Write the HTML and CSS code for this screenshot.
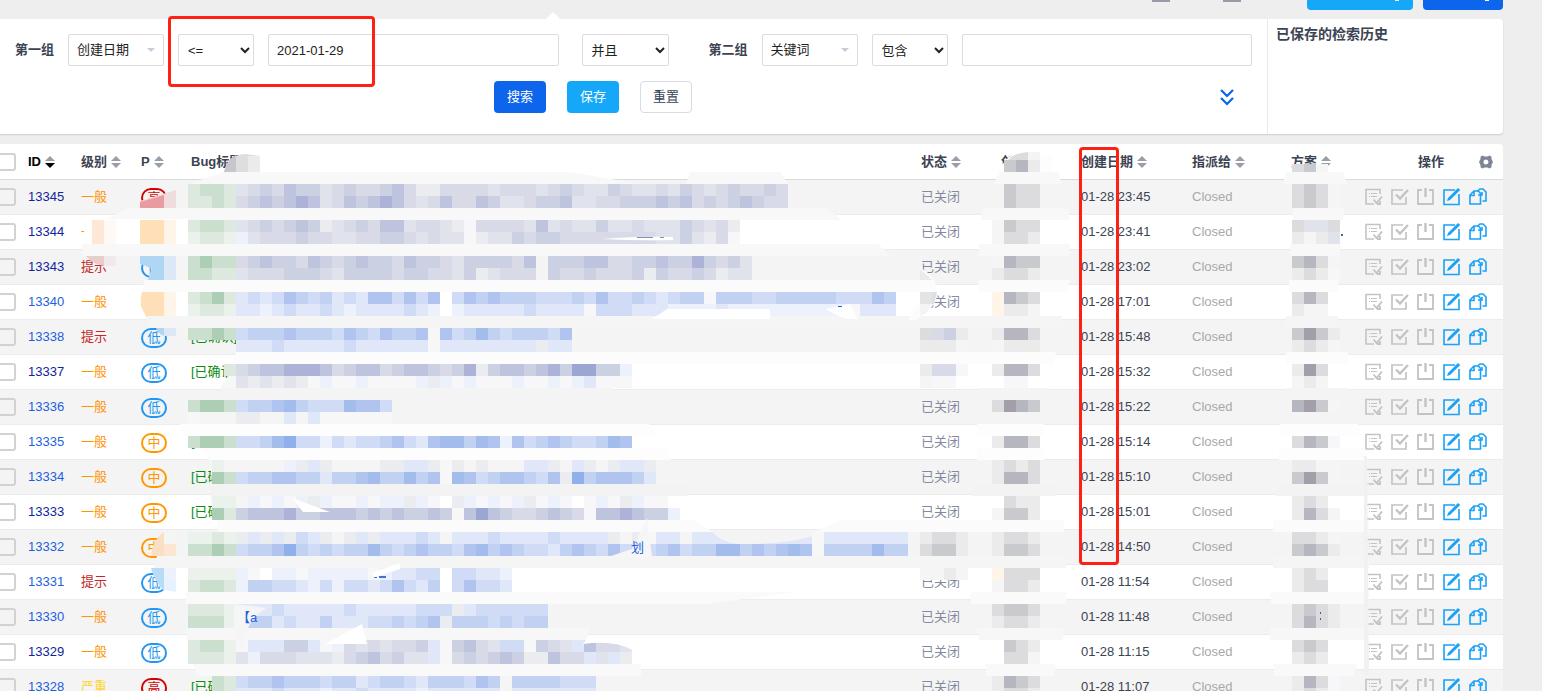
FILE: index.html
```html
<!DOCTYPE html>
<html lang="zh-CN">
<head>
<meta charset="utf-8">
<title>Bug</title>
<link rel="stylesheet" href="styles.css">
</head>
<body>
<svg class="defs" aria-hidden="true">
  <symbol id="i-confirm" viewBox="0 0 18 18"><path d="M15 6V1.500H1V16h8" fill="none" stroke="currentColor" stroke-width="1.600"/><path d="M4 5.500h1M6 5.500h6M4 8.500h1M6 8.500h6" stroke="currentColor"/><path d="M8.500 11.500l3 3.500 5.500-6.500M15 13v3h-3" fill="none" stroke="currentColor" stroke-width="1.800"/></symbol>
  <symbol id="i-check" viewBox="0 0 18 18"><path d="M12 2H1v14h14V9" fill="none" stroke="currentColor" stroke-width="1.700"/><path d="M5 6.500l4 4 8-8.500" fill="none" stroke="currentColor" stroke-width="2.400"/></symbol>
  <symbol id="i-power" viewBox="0 0 18 18"><path d="M5 2H1v14h15V2h-4" fill="none" stroke="currentColor" stroke-width="1.800"/><path d="M8.500 0v9" stroke="currentColor" stroke-width="2.400"/></symbol>
  <symbol id="i-edit" viewBox="0 0 18 18"><path d="M12 2H1v14.500h15V6" fill="none" stroke="currentColor" stroke-width="1.600"/><path d="M4 13l1-3L15 0l2.200 2L7 12z" fill="currentColor"/></symbol>
  <symbol id="i-copy" viewBox="0 0 18 18"><path d="M5 3h4.500l2 2.500V16H1V7zM5 3v4.500H1" fill="none" stroke="currentColor" stroke-width="1.600"/><path d="M8.500 3L11 1h3l3 3v9h-3.500M13 4v3H9" fill="none" stroke="currentColor" stroke-width="1.600"/></symbol>
  <symbol id="i-sort" viewBox="0 0 10 12"><path d="M5 0l5 5H0z" fill="#9b9ea8"/><path d="M5 12L0 7h10z" fill="currentColor"/></symbol>
</svg>
<header class="topbar">
  <span class="tick"></span><span class="tick"></span>
  <button class="top-btn sky" aria-label="导出"></button>
  <button class="top-btn royal" aria-label="提Bug"></button>
</header>
<main class="main">
  <section class="search">
    <form class="search-form" onsubmit="return false">
      <div class="groups">
        <div class="group">
          <label for="f1">第一组</label>
          <span class="pick"><select id="f1"><option>创建日期</option></select></span>
          <select class="op" aria-label="条件"><option>&lt;=</option></select>
          <input type="text" value="2021-01-29" aria-label="值">
        </div>
        <select class="join" aria-label="并且"><option>并且</option></select>
        <div class="group">
          <label for="f2">第二组</label>
          <span class="pick"><select id="f2"><option>关键词</option></select></span>
          <select class="op" aria-label="条件"><option>包含</option></select>
          <input type="text" aria-label="值">
        </div>
      </div>
      <div class="actions">
        <div class="buttons">
          <button class="btn royal">搜索</button>
          <button class="btn sky">保存</button>
          <button class="btn plain" type="reset">重置</button>
        </div>
        <button class="more" aria-label="更多"><svg width="14" height="17" viewBox="0 0 14 17"><path d="M1 1l6 6 6-6M1 9l6 6 6-6" fill="none" stroke="#0d62ec" stroke-width="2.200"/></svg></button>
      </div>
    </form>
    <aside class="saved"><h4>已保存的检索历史</h4></aside>
  </section>
  <section class="list">
    <table>
      <colgroup><col class="c-check"><col class="c-id"><col class="c-level"><col class="c-pri"><col><col class="c-status"><col class="c-by"><col class="c-date"><col class="c-to"><col class="c-plan"><col class="c-act"></colgroup>
      <thead><tr>
        <th><input type="checkbox" aria-label="全选"></th>
        <th class="sorted">ID<svg class="sort"><use href="#i-sort"/></svg></th>
        <th>级别<svg class="sort"><use href="#i-sort"/></svg></th>
        <th>P<svg class="sort"><use href="#i-sort"/></svg></th>
        <th>Bug标题</th>
        <th>状态<svg class="sort"><use href="#i-sort"/></svg></th>
        <th>创建</th>
        <th>创建日期<svg class="sort"><use href="#i-sort"/></svg></th>
        <th>指派给<svg class="sort"><use href="#i-sort"/></svg></th>
        <th>方案<svg class="sort"><use href="#i-sort"/></svg></th>
        <th><div class="act-head"><span>操作</span><svg width="14" height="14" viewBox="0 0 14 14"><path fill="#7e8594" fill-rule="evenodd" d="M3.500 .5L5.500 1.500h3L10.500 .5l2 1.200v2.200L14 7l-1.500 3.100v2.200l-2 1.200-2-1h-3l-2 1-2-1.200v-2.200L0 7l1.500-3.100V1.700zM7 4.500a2.500 2.500 0 100 5 2.500 2.500 0 000-5z"/></svg></div></th>
      </tr></thead>
      <tbody id="rows"></tbody>
    </table>
    <svg class="mosaic" id="mosaic" width="1503" height="547" viewBox="0 144 1503 547" shape-rendering="crispEdges" aria-hidden="true"></svg>
  </section>
</main>
<div class="mark mark-filter"></div>
<div class="mark mark-date"></div>
<script src="app.js"></script>
</body>
</html>
```
FILE: styles.css
```css
* { box-sizing: border-box; }
body {
  margin: 0;
  height: 100vh;
  overflow: hidden;
  position: relative;
  background: #eee;
  color: #3c4353;
  font: 13px/20px "Liberation Sans", "Noto Sans CJK SC", sans-serif;
}
.defs { display: none; }
button, input, select { font: inherit; color: inherit; }
button { cursor: pointer; }
.topbar {
  height: 19px;
  margin-right: 39px;
  display: flex;
  justify-content: flex-end;
  align-items: flex-start;
}
.tick { width: 18px; height: 2px; margin-right: 53px; background: #9a9ba8; }
.tick + .tick { margin-right: 66px; }
.top-btn { height: 10px; border: 0; padding: 0; border-radius: 0 0 4px 4px; position: relative; }
.top-btn::after { content: ""; position: absolute; top: 0; right: 14px; width: 4px; height: 1px; background: #fff; }
.top-btn.sky { width: 106px; margin-right: 10px; }
.top-btn.royal { width: 80px; }
.sky { background: #16a8f8; color: #fff; }
.royal { background: #0d65ec; color: #fff; }
.main { margin-right: 39px; }
.search {
  display: flex;
  position: relative;
  background: #fff;
  border-radius: 0 4px 4px 0;
  box-shadow: 0 1px 2px rgba(0, 0, 0, .14);
}
.search::before {
  content: "";
  position: absolute;
  left: 546px;
  top: -7px;
  border: solid transparent;
  border-width: 0 7px 7px;
  border-bottom-color: #fff;
}
.search-form { flex: 1; padding: 15px 15px 21px; }
.saved { width: 236px; border-left: 1px solid #eaeaea; padding: 5px 8px; }
.saved h4 { margin: 0; font-size: 14px; }
.groups { display: flex; align-items: center; }
.group { flex: 1; display: flex; align-items: center; gap: 14px; min-width: 0; }
.group label { font-weight: 700; white-space: nowrap; }
.group input, .groups select {
  height: 32px;
  background: #fff;
  border: 1px solid #dcdcdc;
  border-radius: 2px;
  color: #222;
}
.group input { flex: 1; min-width: 0; padding: 0 8px; }
.groups .op { width: 76px; padding: 0 5px; }
.groups .join { width: 87px; padding: 0 5px; margin: 0 40px 0 23px; }
.pick { position: relative; }
.groups .pick select { appearance: none; width: 96px; padding: 0 8px; display: block; }
.pick::after {
  content: "";
  position: absolute;
  right: 9px;
  top: 14px;
  border: solid transparent;
  border-width: 4px 4px 0;
  border-top-color: #c9ccd8;
}
.actions { display: flex; align-items: center; margin-top: 15px; }
.buttons { flex: 1; display: flex; justify-content: center; gap: 21px; }
.btn { width: 52px; height: 32px; border: 0; border-radius: 4px; padding: 0; }
.btn.plain { background: #fff; border: 1px solid #d8dbe4; }
.more { width: 81px; display: flex; justify-content: flex-end; padding: 0 18px 0 0; border: 0; background: none; }
.list { margin-top: 10px; position: relative; background: #fff; border-radius: 0 4px 0 0; }
table { width: 100%; table-layout: fixed; border-collapse: separate; border-spacing: 0; }
.c-check { width: 28px; }
.c-id { width: 53px; }
.c-level { width: 60px; }
.c-pri { width: 50px; }
.c-status, .c-by { width: 80px; }
.c-date { width: 111px; }
.c-to { width: 99px; }
.c-plan { width: 74px; }
.c-act { width: 138px; }
th, td { height: 35px; padding: 0; text-align: left; white-space: nowrap; border-bottom: 1px solid #ececec; }
th { height: 36px; border-bottom-color: #d9dbdb; }
tbody tr:nth-child(odd) { background: #f4f4f4; }
.sort { width: 10px; height: 12px; margin-left: 4px; vertical-align: -2px; color: #9b9ea8; }
.sorted, .sorted .sort { color: #000; }
input[type="checkbox"] {
  appearance: none;
  display: block;
  width: 18px;
  height: 18px;
  margin: 0 0 0 -2px;
  border: 2px solid #d2d2d2;
  border-radius: 3px;
}
a { color: #1d5fe0; text-decoration: none; }
a.seen { color: #10259a; }
.lv-normal { color: #ff9300; }
.lv-hint { color: #c62828; }
.lv-serious { color: #fdd53a; }
.pri {
  display: block;
  width: 26px;
  height: 20px;
  margin-top: 2px;
  border: 2px solid;
  border-radius: 10px;
  line-height: 16px;
  text-align: center;
}
.pri-high { color: #d50000; }
.pri-mid { color: #ff9800; }
.pri-low { color: #2196f3; }
.tag { color: #0a8a10; }
.status { color: #838a9d; }
.closed { color: #a9a9a9; }
.act-head { display: flex; justify-content: space-between; align-items: center; padding: 0 10px 0 53px; }
.acts { display: flex; gap: 8px; }
.acts button { border: 0; padding: 0; background: none; color: #c3c3c3; display: block; }
.acts .on { color: #1ba1f5; }
.acts svg { display: block; width: 18px; height: 18px; }
.mosaic { position: absolute; left: 0; top: 0; pointer-events: none; }
.mark { position: absolute; border: 3px solid #ff2014; border-radius: 4px; pointer-events: none; }
.mark-filter { left: 168px; top: 16px; width: 207px; height: 71px; }
.mark-date { left: 1079px; top: 147px; width: 40px; height: 418px; }
```
FILE: app.js
```js
const bugs = [
  [13345, '一般', '高', '23:45', 1], [13344, '一般', '中', '23:41', 1], [13343, '提示', '低', '23:02', 1],
  [13340, '一般', '中', '17:01', 0], [13338, '提示', '低', '15:48', 0], [13337, '一般', '低', '15:32', 1],
  [13336, '一般', '低', '15:22', 0], [13335, '一般', '中', '15:14', 0], [13334, '一般', '中', '15:10', 0],
  [13333, '一般', '中', '15:01', 1], [13332, '一般', '中', '14:50', 0], [13331, '提示', '低', '11:54', 0],
  [13330, '一般', '低', '11:48', 0], [13329, '一般', '低', '11:15', 1], [13328, '严重', '高', '11:07', 0]
];
const level = { '一般': 'normal', '提示': 'hint', '严重': 'serious' };
const pri = { '高': 'high', '中': 'mid', '低': 'low' };
const icons = [['confirm', '确认'], ['check', '解决'], ['power', '关闭'], ['edit', '编辑'], ['copy', '复制']];
document.getElementById('rows').innerHTML = bugs.map(([id, lv, p, time, seen]) => `<tr>
  <td><input type="checkbox" aria-label="${id}"></td>
  <td><a href="#${id}" class="${seen ? 'seen' : ''}">${id}</a></td>
  <td class="lv-${level[lv]}">${lv}</td>
  <td><span class="pri pri-${pri[p]}">${p}</span></td>
  <td><span class="tag">[已确认]</span></td>
  <td class="status">已关闭</td><td></td><td>01-28 ${time}</td><td class="closed">Closed</td><td></td>
  <td><div class="acts">${icons.map(([n, t], i) => `<button class="${i > 2 ? 'on' : ''}" aria-label="${t}"><svg><use href="#i-${n}"/></svg></button>`).join('')}</div></td>
</tr>`).join('');

/* Pixelated cover over the private columns: 12px tiles, one palette letter each. */
const palette = {
  w: '#ffffff', 0: '#f7f7fa', g: '#dde9df', h: '#cadfce', j: '#abceb4', l: '#eaf2eb',
  1: '#ebecef', 2: '#e1e3ec', 3: '#d8dbe7', 4: '#cbd0e2', 5: '#bfc4de', 6: '#acb2d8', 7: '#9ca6d2',
  A: '#edf1fc', B: '#dfe7f8', C: '#d0dcf5', D: '#c1d1f2', E: '#b0c4ef', F: '#a2bdec', G: '#8fb0ea',
  p: '#ffdfb8', q: '#fff4e8', r: '#e99ca0', s: '#f1dcdd', t: '#afd6f2', u: '#dce8f5',
  o: '#fde8d8', v: '#f5f5f6', x: '#ebebec', y: '#dcdcdf', z: '#c9cace', Z: '#b5b6bf', Y: '#a29faa'
};
const bands = [
  [172, '#f8f8f8', [224, 570, 640, 188], [690, 780, 788, 686], [1000, 1059, 1061, 993], [1286, 1343, 1347, 1283]],
  [208, '#f8f8f8', [128, 827, 841, 105], [983, 1068, 1070, 981], [1293, 1344, 1343, 1293]],
  [244, '#f8f8f8', [82, 878, 890, 83], [979, 1070, 1070, 979], [1290, 1341, 1340, 1290]],
  [280, '#fbfbfb', [145, 933, 936, 142], [979, 1069, 1068, 979], [1289, 1338, 1338, 1289]],
  [316, '#f5f5f5', [145, 1062, 1062, 150], [1286, 1338, 1338, 1284]],
  [352, '#fcfcfc', [236, 1056, 1054, 231], [1286, 1348, 1348, 1286]],
  [388, '#f4f4f4', [222, 612, 600, 220], [978, 1048, 1048, 978], [1286, 1348, 1348, 1286]],
  [424, '#fdfdfd', [180, 649, 656, 182], [977, 1044, 1044, 977], [1280, 1358, 1362, 1279]],
  [448, '#fdfdfd', [200, 664, 671, 209], [977, 1044, 1044, 977], [1279, 1365, 1367, 1279]],
  [484, '#f3f3f3', [210, 690, 688, 210], [971, 1056, 1056, 971], [1275, 1369, 1369, 1275]],
  [520, '#fbfbfb', [217, 695, 712, 218], [840, 1064, 1064, 815], [1273, 1369, 1369, 1273]],
  [556, '#f5f5f5', [157, 1066, 1066, 154], [1273, 1369, 1369, 1273]],
  [592, '#fafafa', [185, 795, 706, 186], [971, 1067, 1066, 971], [1271, 1369, 1369, 1271]],
  [628, '#f7f7f7', [185, 591, 586, 187], [977, 1064, 1063, 979], [1270, 1369, 1367, 1270]],
  [664, '#f9f9f9', [193, 641, 641, 197], [985, 1056, 1054, 987], [1273, 1357, 1353, 1275]]
];
const titles = {
  184: 'ghhg2343544234334531133332333234322432232432343343',
  196: 'gghg3454565235456532353354223445223344454534345433',
  220: 'ghhg234345412343552332103333252322422322243231',
  232: 'lgglA23334332233443232201224344333333332242130',
  256: 'hjhh3454435434544354432444435.44455334454464342',
  268: 'hhgg2333444324444344332412333.43343334143343122',
  292: 'ghjgBCBCEDCDBCBEECECEwCEDEDDDCCCDCECCDCBCDD0DDDCCDDDDDCCCED',
  304: 'lgglBBABCBBCBABBBBCBAwABBBBBCBBBB0CCCBBBAAAABAAAAAAAAAA0BBB',
  328: 'hhjhCDDDEDDDCEDCEDDE.ECDFDCDDDCE',
  340: '....BBBCBBBBBCBBBBBB.BBBBBBBB1BB',
  364: '...g34556665345534554346145545647744A',
  376: '....2121210A00A0000A1A0A0..A00A0AB000',
  400: 'hjjhCDDEFDCCCFEEC',
  412: '.vvv11vvBvB',
  436: 'hjjhCCDFGCCACBCCDECBEFFDFEAECDEDCCDFE',
  460: '..lvvvvvA1B1vvvv11BB1.1v1vvvBB1vB1v1BB1',
  472: '..jhCDDEEDDBDDEFDDFDE.FECDEEDCE1GDEEEDB',
  496: '..llvA0A0A1A00A0AA1A0w1A0A0A10A0w0A01A0',
  508: '..jg455564455545454454.57543345430556544A',
  532: 'llgl1B1B1CB1v1B1BBBCBvBBBCBBBBCBBBB1v1.BBvBBBBBBBBBB.BBBBBBB',
  544: 'hhjhCDDEGDCDCDDFDCDEDDCEFDEDCCBDEDCECBCDECDDFFDEDEFE.DDDDFDD',
  568: 'llllA0wAA0AAAAA0ABBCCwCCBBA',
  580: 'ghhgADDCCBACACCBCECBDwCECCB',
  604: 'ggglBBBCBBBBBCBBBBBCCC1BCCCCCC',
  616: 'hhhl.DDBCBBDBBBCCDCDE1DDDCDCDD',
  640: 'ghhl0BBB44B0A3232334B04532CC0432B5332',
  652: 'gggl2A33322213453422B034345411533B2B1',
  676: '..hgCDDEDDDCDDBCDDCBDDDCEDvDDDDCCC',
  688: '..hgBBBCBBBABBCBBBBABBBBBBvBBBBBBB'
};
const creator = {
  184: '.zyy', 196: '.zyy', 220: 'vzyy', 232: 'vyyx', 256: 'vZzz', 268: 'xyyx', 292: 'qZzy', 304: 'qxxv', 328: 'xZZy', 340: 'vxxx',
  364: 'xZZy', 376: 'w00w', 400: 'yYZz', 436: 'xZZy', 460: 'xyxy', 472: 'xZZy', 496: 'wyxx', 508: 'vzzx', 532: 'xyyx', 544: 'xzzy', 568: 'qyyy',
  580: 'vyyx', 604: 'yzzy', 616: 'xyyx', 640: 'wzyx', 652: 'wyyv', 676: 'xZzy', 688: 'xyyx'
};
const plan = {
  164: 'yzv.', 184: 'yzyv', 196: 'yzyv', 220: 'y22y', 232: 'xvx2', 256: 'zZyv', 268: 'xyx0', 292: 'yZyw', 304: 'xvvw', 328: 'zYzx', 340: 'xyxv',
  364: 'xYyw', 376: 'vxvw', 400: 'ZYzv', 436: 'yZz0', 460: 'xxvv', 472: 'zYzv', 496: 'xyxw', 508: 'xZyv', 532: 'yyxv', 544: 'zZzx', 568: 'xyxw',
  580: 'xyyw', 604: 'yzyx', 616: 'yZyx', 640: 'yzyw', 652: 'xyxw', 676: 'xZy0', 688: 'xyx0'
};
let out = '';
const tiles = (x, y, s, h = 12) => [...s].forEach((c, i) => {
  if (palette[c]) out += `<rect x="${x + i * 12}" y="${y}" width="12" height="${h}" fill="${palette[c]}"/>`;
});
const shape = (d, fill) => { out += `<path d="${d}" fill="${fill}" shape-rendering="auto"/>`; };
/* covered text that carries no tile */
shape('M236 328H572V352H236zM236 364H632V388H220zM188 412H392V424H188zM209 448H656V484H212zM210 496H668V520H215zM188 532H908V556H188zM188 568H512V592H188zM188 640H632V664H200z', '#f7f7f8');
bands.forEach(([y, fill, ...parts]) => parts.forEach(([a, b, c, d]) => shape(`M${a} ${y}H${b}L${c} ${y + 12}H${d}z`, fill)));
Object.entries(titles).forEach(([y, s]) => tiles(188, +y, s));
Object.entries(creator).forEach(([y, s]) => tiles(992, +y, s));
Object.entries(plan).forEach(([y, s]) => tiles(1292, +y, s, y === '164' ? 8 : 12));
tiles(920, 328, 'y34x'); tiles(920, 340, 'xxxv'); tiles(920, 364, 'x330'); tiles(920, 376, 'v00w');
tiles(920, 532, 'xyyx'); tiles(920, 544, 'yzzx'); tiles(920, 568, 'vvxv');
/* brush ends over the level and priority columns */
shape('M140 201L176 190V208H140z', palette.s); shape('M140 202L164 195V208H140z', palette.r);
shape('M84 231Q92 219 104 219H188V244H84z', '#ffffff'); shape('M92 220h12v24H92z', palette.o);
shape('M104 220h12v24h-12z', '#fff9f5'); shape('M86 256H104V266Q92 264 86 256z', '#e9cdcd'); shape('M104 256h12v10h-12z', '#f0e8ea');
tiles(140, 220, 'ppqw', 24);
shape('M140 256H164V264Q153 268 148 280L152 268 140 264z', palette.t); shape('M152 268L164 262V280H148z', palette.t); tiles(164, 256, 'uv', 24);
shape('M142 292H164V316H146Q138 304 142 292z', palette.p); tiles(164, 292, 'qw', 24);
shape('M156 328H164V336Q158 334 156 328z', palette.t); shape('M164 328h12v8h-12z', palette.u);
shape('M151 556Q152 544 160 535L164 532V556z', '#fbdfc4'); shape('M164 544h12v12h-12z', '#fbe6d4'); tiles(164, 532, 'v');
shape('M151 568H164V591Q154 580 151 568z', '#b8dcf7'); tiles(164, 568, 'Aw'); shape('M164 580h12v12l-12-2z', '#e4f3fd');
/* gray blobs over the header */
shape('M224 172Q228 154 246 154L260 156V172z', '#dedee1'); shape('M224 172Q228 158 236 155V172z', '#c8c5cc'); shape('M248 156h12v16h-12z', '#ebebec');
shape('M996 172L1006 160Q1012 152 1028 152L1052 156V172z', '#fdfdfd');
shape('M1008 160Q1014 153 1028 152V160z', '#dadce0'); shape('M1028 152h12v8h-12z', '#f3f4f4'); tiles(1004, 160, 'zZx');
shape('M920 268Q937 276 937 292Q937 308 916 320H908L920 300z', '#fcfcfc');
shape('M920 269L929 277 932 280H920z', '#ebebed'); shape('M920 292H932V304H920z', '#e4e4e7'); shape('M932 292H937L934 304H932z', '#dcdfe6');
shape('M920 304H933L926 313 920 316z', '#f4f4f5');
/* exposed gaps left by the brush */
shape('M652 319L667 309H770V319z', '#ffffff'); shape('M826 309L850 304 858 319H848Q836 316 826 309z', '#ffffff');
shape('M602 239Q640 236 673 237V240Q640 241 602 239z', '#ffffff'); shape('M637 237h16v1h-16zM660 237h4v1h-4z', '#7f8fc0');
shape('M838 306h4v1h-4z', '#1d5fe0');
shape('M712 532Q724 544 740 544Q790 544 812 536V532z', '#f4f4f4');
shape('M325 644L362 624 367 644z', '#ffffff'); shape('M585 640L583 644Q615 640 632 650V640z', '#ffffff');
shape('M292 498L330 512H303z', '#ffffff'); shape('M372 573L400 563V569L374 577z', '#ffffff'); shape('M374 577h3v1h-3zM379 576h7v2h-7z', '#3f74d8');
shape('M608 557L632 549 647 518 652 557z', '#f6f6f6');
shape('M234 604L266 608Q244 622 242 650L234 632z', '#f5f5f5');
out += '<g font-size="13" font-family="Liberation Sans, Noto Sans CJK SC, sans-serif" fill="#1d5fe0"><text x="237" y="622">【a</text><text x="631" y="552">划</text></g>';
shape('M1364 456H1367L1369 676H1364z', '#f1f1f1');
shape('M1341 234h2v2h-2zM1320 612h1v2h-1zM1320 618h1v2h-1z', '#536083');
document.getElementById('mosaic').innerHTML = out;
```
